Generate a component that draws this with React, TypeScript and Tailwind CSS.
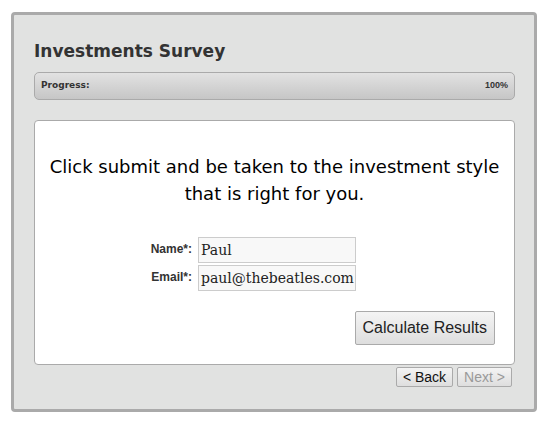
export default function App() {
  return (
    <div className="w-[551px] h-[424px] bg-white pt-[12px] pl-[11px]" style={{ fontFamily: '"DejaVu Sans", sans-serif' }}>
      <div className="w-[526px] h-[400px] border-[3px] border-[#aaaaaa] rounded-[4px] bg-[#e1e2e1] pl-[20px] pr-[19px]">
        <h1 className="text-[17px] font-bold text-[#333333] leading-[22px] pt-[25px] h-[57px]">Investments Survey</h1>
        <div className="h-[28px] rounded-[5px] border border-[#aaaaaa] bg-gradient-to-b from-[#e2e2e2] to-[#c6c6c6] flex items-center justify-between px-[6px] text-[9px] font-bold text-[#333333]" style={{ fontFamily: '"DejaVu Sans", sans-serif' }}>
          <span>Progress:</span>
          <span style={{ fontFamily: '"Liberation Sans", Arial, sans-serif' }}>100%</span>
        </div>
        <div className="mt-[20px] h-[245px] bg-white border border-[#aaaaaa] rounded-[4px] flex flex-col">
          <p className="text-center text-[18px] leading-[27px] text-black mt-[32px] px-[10px]">
            Click submit and be taken to the investment style that is right for you.
          </p>
          <div className="mt-[30px] flex flex-col gap-[2px]" style={{ fontFamily: '"Liberation Sans", Arial, sans-serif' }}>
            <div className="flex items-center">
              <label className="w-[163px] text-right pr-[6px] text-[12px] font-bold text-[#333333] -mt-[2px]">Name*:</label>
              <div className="w-[158px] h-[26px] border border-[#cccccc] bg-[#f8f8f8] px-[2px] text-[14px] leading-[24px] text-[#222222]" style={{ fontFamily: '"DejaVu Serif", serif' }}>Paul</div>
            </div>
            <div className="flex items-center">
              <label className="w-[163px] text-right pr-[6px] text-[12px] font-bold text-[#333333] -mt-[2px]">Email*:</label>
              <div className="w-[158px] h-[26px] border border-[#cccccc] bg-[#f8f8f8] px-[2px] text-[14px] leading-[24px] text-[#222222]" style={{ fontFamily: '"DejaVu Serif", serif' }}>paul@thebeatles.com</div>
            </div>
          </div>
          <div className="flex justify-end pr-[19px] mt-[20px]">
            <button className="h-[34px] px-[7px] border border-[#aaaaaa] rounded-[2px] bg-gradient-to-b from-[#f4f4f4] to-[#dedede] text-[16px] text-[#222222]" style={{ fontFamily: '"Liberation Sans", Arial, sans-serif' }}>Calculate Results</button>
          </div>
        </div>
        <div className="flex justify-end gap-[4px] mt-[2px] pr-[3px]" style={{ fontFamily: '"Liberation Sans", Arial, sans-serif' }}>
          <button className="h-[20px] w-[57px] border border-[#aaaaaa] rounded-[2px] bg-gradient-to-b from-[#f4f4f4] to-[#dedede] text-[14px] leading-[18px] text-[#111111]">&lt; Back</button>
          <button className="h-[20px] w-[55px] border border-[#aaaaaa] rounded-[2px] bg-gradient-to-b from-[#f4f4f4] to-[#dedede] text-[14px] leading-[18px] text-[#999999]">Next &gt;</button>
        </div>
      </div>
    </div>
  );
}
